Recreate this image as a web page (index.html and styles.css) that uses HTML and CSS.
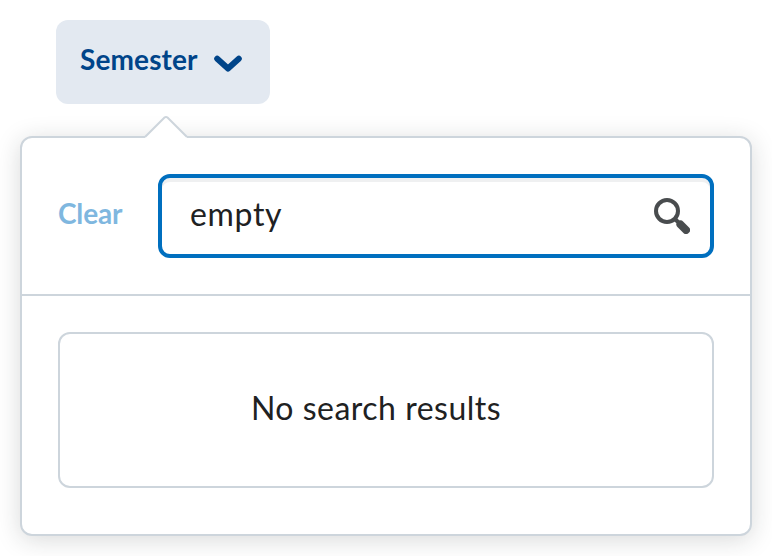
FILE: index.html
```html
<!DOCTYPE html>
<html lang="en">
<head>
<meta charset="utf-8">
<title>Semester filter</title>
<link rel="stylesheet" href="styles.css">
</head>
<body>
<main class="filter">
  <button class="opener" type="button">Semester
    <svg class="chevron" viewBox="0 0 28 18" aria-hidden="true"><path d="M3.200 3.700 14 13.500 24.800 3.700"/></svg>
  </button>
  <section class="dropdown">
    <svg class="pointer" viewBox="0 0 48 24" aria-hidden="true"><path class="pointer-fill" d="M3 24V22.500L22.500 3.600Q24 2.300 25.500 3.600L45 22.500V24Z"/><path class="pointer-line" d="M3 23 22.500 3.600Q24 2.300 25.500 3.600L45 23"/></svg>
    <header class="search-row">
      <span class="clear">Clear</span>
      <div class="search">
        <span class="query">empty</span>
        <svg class="magnifier" viewBox="0 0 36 36" aria-hidden="true"><circle cx="13" cy="13" r="11"/><path class="neck" d="m20 20 7 7"/><path class="handle" d="m26.500 26.500 5.500 5.500"/></svg>
      </div>
    </header>
    <div class="results"><p class="empty">No search results</p></div>
  </section>
</main>
</body>
</html>
```
FILE: styles.css
```css
* { box-sizing: border-box; }
body { margin: 0; background: #fff; color: #202122; font-family: Lato, sans-serif; font-size: 32px; letter-spacing: .5px; }
.filter { padding: 20px; height: 556px; overflow: hidden; }
.opener { display: flex; align-items: center; justify-content: space-between; width: 214px; height: 84px; margin: 0 0 32px 36px; padding: 0 28px 6px 24px; border: 0; border-radius: 12px; background: #e3e9f1; color: #004489; font: 700 28px Lato, sans-serif; letter-spacing: .12px; }
.chevron { width: 28px; height: 18px; margin-top: 10px; fill: none; stroke: #004489; stroke-width: 6; stroke-linecap: round; stroke-linejoin: round; }
.dropdown { position: relative; width: 732px; height: 400px; border: 2px solid #cdd5dc; border-radius: 12px; background: #fff; box-shadow: 0 4px 24px rgba(32, 33, 34, .17); }
.pointer { position: absolute; left: 120px; top: -24px; width: 48px; height: 24px; }
.pointer-fill { fill: #fff; }
.pointer-line { fill: none; stroke: #cdd5dc; stroke-width: 2; }
.search-row { display: flex; align-items: center; justify-content: space-between; height: 158px; padding: 0 36px; border-bottom: 2px solid #cdd5dc; }
.clear { color: #7fb7df; font-size: 28px; font-weight: 700; letter-spacing: -.15px; padding-bottom: 7px; }
.search { display: flex; align-items: center; justify-content: space-between; width: 556px; height: 84px; padding: 0 20px 0 28px; border: 4px solid #006fbf; border-radius: 12px; box-shadow: inset 0 4px #eff0f1; }
.query { padding-bottom: 6px; letter-spacing: .65px; }
.magnifier { width: 36px; height: 36px; fill: none; stroke: #494c4e; }
.magnifier circle { stroke-width: 4; }
.neck { stroke-width: 4; }
.handle { stroke-width: 8; stroke-linecap: round; }
.results { padding: 36px; }
.empty { display: flex; align-items: center; justify-content: center; height: 156px; margin: 0; padding-right: 20px; padding-bottom: 6px; border: 2px solid #cdd5dc; border-radius: 12px; }
```
